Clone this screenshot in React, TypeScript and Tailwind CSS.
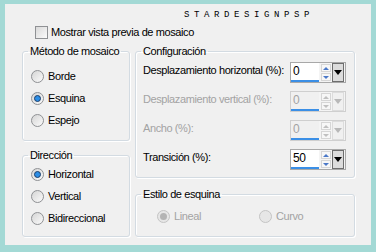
import type { ReactNode } from "react";

const FONT = "font-['Liberation_Sans',Arial,sans-serif]";

function Radio({ checked, disabled }: { checked?: boolean; disabled?: boolean }) {
  return (
    <span
      className={`flex h-[13px] w-[13px] shrink-0 items-center justify-center rounded-full border ${
        disabled ? "border-[#c4c4c4] bg-[#e6e6e6]" : "border-[#8f9194] bg-gradient-to-br from-[#d5d5d5] to-[#fbfbfb]"
      }`}
    >
      {checked && (
        <span
          className={`h-[7px] w-[7px] rounded-full ${
            disabled ? "bg-[#b4b4b4]" : "border border-[#1d3f6a] bg-[#2c8ee6]"
          }`}
        />
      )}
    </span>
  );
}

function RadioRow({ label, checked, disabled }: { label: string; checked?: boolean; disabled?: boolean }) {
  return (
    <div className="flex h-[22px] items-center gap-[4px]">
      <Radio checked={checked} disabled={disabled} />
      <span className={disabled ? "text-[#a3a3a3]" : "text-black"}>{label}</span>
    </div>
  );
}

function Group({ title, className, children }: { title: string; className: string; children: ReactNode }) {
  return (
    <fieldset
      className={`rounded-[3px] border border-[#d3dbe2] shadow-[1px_1px_0_#ffffff,inset_1px_1px_0_#ffffff] ${className}`}
    >
      <legend className="ml-[5px] whitespace-nowrap px-[2px] leading-[15px]">{title}</legend>
      {children}
    </fieldset>
  );
}

function Spinner({ value, disabled }: { value: string; disabled?: boolean }) {
  return (
    <div
      className={`flex h-[21px] w-[56px] shrink-0 border ${disabled ? "border-[#cfcfcf]" : "border-[#a8a8a8]"} bg-[#f4f4f4]`}
    >
      <div className={`flex w-[28px] flex-col ${disabled ? "bg-[#f0f0f0]" : "bg-white"}`}>
        <span className={`flex-1 pl-[2px] text-[12px] leading-[17px] ${disabled ? "text-[#a3a3a3]" : "text-black"}`}>
          {value}
        </span>
        <div className="h-[3px] bg-[#3b8fe6]" />
      </div>
      <div className="ml-[2px] flex w-[10px] flex-col justify-center gap-[1px] py-[1px]">
        <div className="flex h-[8px] items-center justify-center border border-[#d6d6d6] bg-[#f7f7f7]">
          <span
            className={`h-0 w-0 border-x-[3px] border-b-[3px] border-x-transparent ${
              disabled ? "border-b-[#c0c0c0]" : "border-b-[#4a78c8]"
            }`}
          />
        </div>
        <div className="flex h-[8px] items-center justify-center border border-[#d6d6d6] bg-[#f7f7f7]">
          <span
            className={`h-0 w-0 border-x-[3px] border-t-[3px] border-x-transparent ${
              disabled ? "border-t-[#c0c0c0]" : "border-t-[#4a78c8]"
            }`}
          />
        </div>
      </div>
      <div
        className={`ml-[1px] flex w-[12px] items-center justify-center border ${
          disabled ? "border-[#dcdcdc] bg-[#f0f0f0]" : "border-[#6e6e6e] bg-[#dcdcdc]"
        }`}
      >
        <span
          className={`h-0 w-0 border-x-[4px] border-t-[5px] border-x-transparent ${
            disabled ? "border-t-[#b8b8b8]" : "border-t-black"
          }`}
        />
      </div>
    </div>
  );
}

function SpinRow({ label, value, disabled }: { label: string; value: string; disabled?: boolean }) {
  return (
    <div className="flex h-[21px] items-center justify-between">
      <span className={`-mt-[4px] whitespace-nowrap ${disabled ? "text-[#a3a3a3]" : "text-black"}`}>{label}</span>
      <Spinner value={value} disabled={disabled} />
    </div>
  );
}

export default function App() {
  return (
    <div
      className={`h-[252px] w-[376px] bg-[#a3d9d5] pb-[7px] pl-[5px] pr-[5px] pt-[4px] text-[11px] tracking-[-0.4px] ${FONT}`}
    >
      <div className="h-full bg-[#f0f0f0] pl-[17px] pr-[11px]">
        {/* Header */}
        <div className="flex h-[16px] items-end justify-end pr-[46px]">
          <span className="font-['Liberation_Mono',monospace] text-[9px] leading-[9px] tracking-[4.6px] text-black">
            STARDESIGNPSP
          </span>
        </div>
        <div className="flex h-[24px] items-center gap-[3px] pl-[13px]">
          <span className="h-[13px] w-[13px] border border-[#8f9194] bg-gradient-to-br from-[#d9d9d9] to-[#fbfbfb]" />
          <span>Mostrar vista previa de mosaico</span>
        </div>

        {/* Body */}
        <div className="flex gap-[5px]">
          <div className="flex w-[108px] flex-col gap-[7px]">
            <Group title="Método de mosaico" className="h-[97px]">
              <div className="pl-[8px] pt-[6px]">
                <RadioRow label="Borde" />
                <RadioRow label="Esquina" checked />
                <RadioRow label="Espejo" />
              </div>
            </Group>
            <Group title="Dirección" className="h-[89px]">
              <div className="pl-[8px]">
                <RadioRow label="Horizontal" checked />
                <RadioRow label="Vertical" />
                <RadioRow label="Bidireccional" />
              </div>
            </Group>
          </div>
          <div className="flex w-[220px] flex-col gap-[9px]">
            <Group title="Configuración" className="h-[134px]">
              <div className="flex flex-col gap-[8px] pl-[7px] pr-[8px] pt-[3px]">
                <SpinRow label="Desplazamiento horizontal (%):" value="0" />
                <SpinRow label="Desplazamiento vertical (%):" value="0" disabled />
                <SpinRow label="Ancho (%):" value="0" disabled />
                <SpinRow label="Transición (%):" value="50" />
              </div>
            </Group>
            <Group title="Estilo de esquina" className="h-[50px]">
              <div className="flex gap-[58px] pl-[21px] pt-[3px]">
                <RadioRow label="Lineal" checked disabled />
                <RadioRow label="Curvo" disabled />
              </div>
            </Group>
          </div>
        </div>
      </div>
    </div>
  );
}
